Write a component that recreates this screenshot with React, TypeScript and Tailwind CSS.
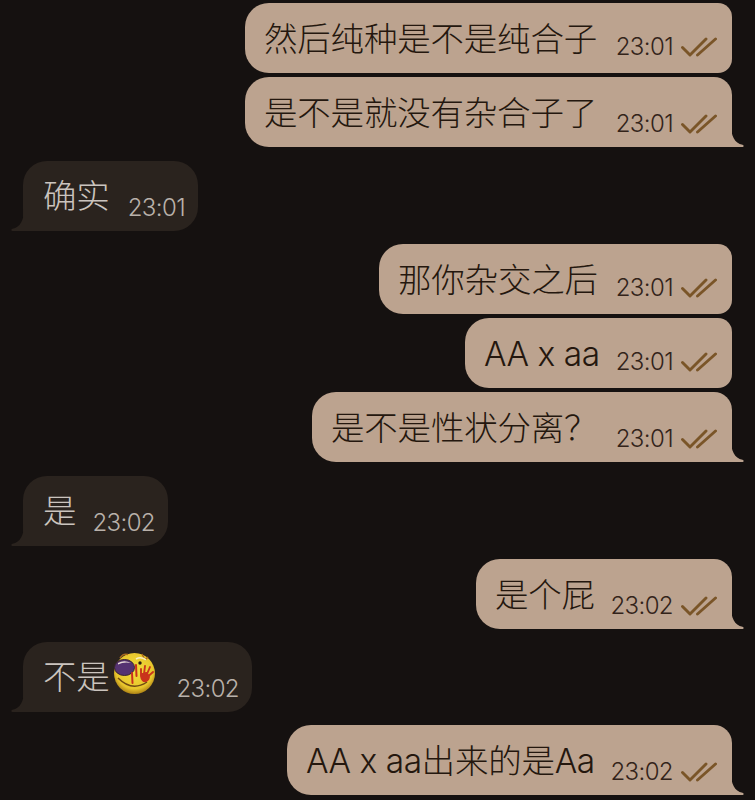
import type { ReactNode } from "react";

const Ticks = () => (
  <svg width="36" height="20" viewBox="0 0 36 20" fill="none" stroke="#7a5528" strokeWidth="2.9" strokeLinecap="round" strokeLinejoin="round" className="shrink-0">
    <path d="M1.5 10.5 L9 18 L25 2" />
    <path d="M16.5 18 L34.5 2" />
  </svg>
);

const TailRight = () => (
  <svg width="13" height="22" viewBox="0 0 13 22" className="absolute right-[-12px] bottom-0 text-[#bca38f]" fill="currentColor">
    <path d="M0 0 C0 11 3.5 18 11.5 19.8 C13.2 20.3 13 22 11 22 L0 22 Z" />
  </svg>
);

const TailLeft = () => (
  <svg width="13" height="22" viewBox="0 0 13 22" className="absolute left-[-12px] bottom-0 text-[#2a231e]" fill="currentColor">
    <path d="M13 0 C13 11 9.5 18 1.5 19.8 C-0.2 20.3 0 22 2 22 L13 22 Z" />
  </svg>
);

const Face = () => (
  <svg width="43" height="43" viewBox="0 0 43 43" className="ml-[3px] mt-[-8px] shrink-0">
    <defs>
      <radialGradient id="f" cx="50%" cy="42%" r="58%">
        <stop offset="0%" stopColor="#f1de3c" />
        <stop offset="78%" stopColor="#e8c52c" />
        <stop offset="100%" stopColor="#ad8216" />
      </radialGradient>
    </defs>
    <circle cx="21.5" cy="21.5" r="20.5" fill="url(#f)" />
    <path d="M7 6 Q10 1 15 2.5 M29 2 L31 6 M35 5 L32 8" stroke="#a8691e" strokeWidth="1.5" fill="none" />
    <ellipse cx="11.5" cy="15.5" rx="10" ry="8" fill="#553372" stroke="#3a2430" strokeWidth="1" />
    <path d="M5 11 Q11 7.5 18 11 Q11 9.5 5 12.5 Z" fill="#e8dcd8" />
    <circle cx="27" cy="11" r="1.7" fill="#2b1c10" />
    <path d="M23 7 Q28 4 33 8" stroke="#f8f0c0" strokeWidth="1.5" fill="none" />
    <path d="M19 21 L19.5 31 M23 13 L23.5 24" stroke="#c9301c" strokeWidth="2" strokeLinecap="round" fill="none" />
    <path d="M5 26 Q19 40 34 30" stroke="#6f4a12" strokeWidth="1.5" fill="none" />
    <path d="M28 24 L28 17 M31 22 L32 14 M34 22 L37 15 M35.5 24 L40 20 M28 24 Q29 30 33 29 Q36 28 36 24 L33 21 L29 22 Z" stroke="#c9341c" strokeWidth="1.9" strokeLinecap="round" fill="#c9341c" />
  </svg>
);

const Out = ({ text, time, w, tail }: { text: ReactNode; time: string; w: string; tail?: boolean }) => (
  <div className="flex justify-end pr-[23px]">
    <div className={`relative flex h-[70px] items-start justify-between bg-[#bca38f] pl-[19px] pr-[15px] rounded-tl-[24px] rounded-bl-[24px] ${w} ${tail ? "rounded-tr-[18px] rounded-br-none" : "rounded-tr-[14px] rounded-br-[14px]"}`}>
      <span className="mt-[15px] text-[33.5px] font-light leading-[42px] tracking-[-0.2px] whitespace-nowrap text-[#24170e]">{text}</span>
      <span className={`flex items-center gap-[8px] ${tail ? "mt-[31px]" : "mt-[28px]"}`}>
        <span className="text-[24px] font-light leading-[32px] tracking-[-0.6px] text-[#33231a]">{time}</span>
        <Ticks />
      </span>
      {tail && <TailRight />}
    </div>
  </div>
);

const In = ({ text, time, w, face }: { text: string; time: string; w: string; face?: boolean }) => (
  <div className="flex pl-[23px]">
    <div className={`relative flex h-[70px] items-start justify-between rounded-tl-[24px] rounded-tr-[24px] rounded-br-[24px] bg-[#2a231e] pl-[20px] pr-[13px] ${w}`}>
      <span className="mt-[14px] flex items-center text-[33.5px] font-light leading-[42px] tracking-[-0.2px] whitespace-nowrap text-[#cbc4be]">
        {text}
        {face && <Face />}
      </span>
      <span className="mt-[31px] text-[24px] font-light leading-[32px] tracking-[-0.6px] text-[#b9b1aa]">{time}</span>
      <TailLeft />
    </div>
  </div>
);

const Latin = ({ children }: { children: string }) => <span className="tracking-[-0.5px]">{children}</span>;

export default function App() {
  return (
    <div className="flex h-[800px] w-[755px] flex-col overflow-hidden bg-[#151110] pt-[3px] font-['Inter','Noto_Sans_CJK_SC',sans-serif]">
      <div className="flex flex-col gap-[4px]">
        <Out text="然后纯种是不是纯合子" time="23:01" w="w-[487px]" />
        <Out text="是不是就没有杂合子了" time="23:01" w="w-[487px]" tail />
      </div>
      <div className="mt-[14px]">
        <In text="确实" time="23:01" w="w-[175px]" />
      </div>
      <div className="mt-[13px] flex flex-col gap-[4px]">
        <Out text="那你杂交之后" time="23:01" w="w-[353px]" />
        <Out text={<Latin>AA x aa</Latin>} time="23:01" w="w-[267px]" />
        <Out text="是不是性状分离？" time="23:01" w="w-[420px]" tail />
      </div>
      <div className="mt-[14px]">
        <In text="是" time="23:02" w="w-[145px]" />
      </div>
      <div className="mt-[13px]">
        <Out text="是个屁" time="23:02" w="w-[256px]" tail />
      </div>
      <div className="mt-[13px]">
        <In text="不是" time="23:02" w="w-[229px]" face />
      </div>
      <div className="mt-[13px]">
        <Out text={<><Latin>AA x aa</Latin>出来的是<Latin>Aa</Latin></>} time="23:02" w="w-[445px]" tail />
      </div>
    </div>
  );
}
